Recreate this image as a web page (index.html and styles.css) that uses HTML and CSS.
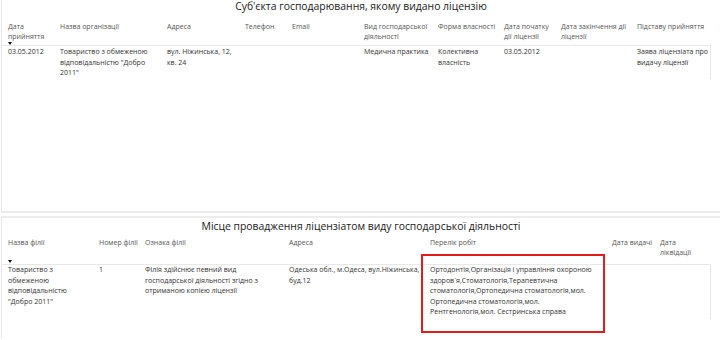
FILE: index.html
```html
<!DOCTYPE html>
<html lang="uk">
<head>
<meta charset="utf-8">
<link rel="stylesheet" href="styles.css">
</head>
<body>
<section class="panel panel-top">
  <h2 class="title">Суб'єкта господарювання, якому видано ліцензію</h2>
  <table class="grid grid-top">
    <colgroup>
      <col style="width:52px"><col style="width:107px"><col style="width:78px"><col style="width:47px"><col style="width:72px">
      <col style="width:74px"><col style="width:66px"><col style="width:57px"><col style="width:76px"><col style="width:79px">
    </colgroup>
    <thead>
      <tr>
        <th>Дата прийняття<span class="sort"></span></th>
        <th>Назва організації</th>
        <th>Адреса</th>
        <th>Телефон</th>
        <th>Email</th>
        <th>Вид господарської діяльності</th>
        <th>Форма власності</th>
        <th>Дата початку дії ліцензії</th>
        <th>Дата закінчення дії ліцензії</th>
        <th class="end">Підставу прийняття</th>
      </tr>
    </thead>
    <tbody>
      <tr>
        <td>03.05.2012</td>
        <td>Товариство з обмеженою відповідальністю "Добро 2011"</td>
        <td>вул. Ніжинська, 12, кв. 24</td>
        <td></td>
        <td></td>
        <td>Медична практика</td>
        <td>Колективна власність</td>
        <td>03.05.2012</td>
        <td></td>
        <td class="last">Заява ліцензіата про видачу ліцензії</td>
      </tr>
    </tbody>
  </table>
</section>
<section class="panel panel-bottom">
  <h2 class="title">Місце провадження ліцензіатом виду господарської діяльності</h2>
  <table class="grid grid-bottom">
    <colgroup>
      <col style="width:91px"><col style="width:46px"><col style="width:144px"><col style="width:141px">
      <col style="width:182px"><col style="width:48px"><col style="width:56px">
    </colgroup>
    <thead>
      <tr>
        <th>Назва філії<span class="sort sort-low"></span></th>
        <th class="nowrap">Номер філії</th>
        <th>Ознака філії</th>
        <th>Адреса</th>
        <th>Перелік робіт</th>
        <th class="nowrap">Дата видачі</th>
        <th class="narrow">Дата ліквідації</th>
      </tr>
    </thead>
    <tbody>
      <tr>
        <td>Товариство з обмеженою відповідальністю "Добро 2011"</td>
        <td>1</td>
        <td>Філія здійснює певний вид господарської діяльності згідно з отриманою копією ліцензії</td>
        <td>Одеська обл., м.Одеса, вул.Ніжинська, буд.12</td>
        <td class="works"><span class="highlight"></span>Ортодонтія,Організація і управління охороною здоров`я,Стоматологія,Терапевтична стоматологія,Ортопедична стоматологія,мол. Ортопедична стоматологія,мол. Рентгенологія,мол. Сестринська справа</td>
        <td></td>
        <td class="last"></td>
      </tr>
    </tbody>
  </table>
</section>
</body>
</html>
```
FILE: styles.css
```css
html, body {
  margin: 0;
  padding: 0;
  background: #fff;
}
body {
  width: 720px;
  height: 340px;
  overflow: hidden;
  font-family: "Open Sans", "DejaVu Sans", sans-serif;
  color: #333;
}
.panel {
  margin-left: 1px;
  border-left: 1px solid #e6e6e6;
  box-sizing: border-box;
}
.panel-top {
  height: 214px;
  border-bottom: 2px solid #ebebeb;
}
.panel-bottom {
  margin-top: 3px;
  border-top: 2px solid #ededed;
  height: 123px;
}
.title {
  margin: 0;
  font-family: "Open Sans", sans-serif;
  font-weight: normal;
  font-size: 10.4px;
  line-height: 15px;
  text-align: center;
  color: #1a1a1a;
}
.panel-top .title {
  margin-top: -1px;
}
.panel-bottom .title {
  margin-top: 1px;
}
.grid {
  table-layout: fixed;
  border-collapse: collapse;
  border-spacing: 0;
  font-size: 7px;
}
.grid th {
  font-weight: normal;
  color: #555;
  text-align: left;
  vertical-align: top;
  line-height: 10px;
  padding: 8px 2px 0 6px;
  height: 23px;
  border-bottom: 1px solid #e8e8e8;
  position: relative;
}
.grid th.end {
  padding-right: 0;
}
.grid th.narrow {
  padding-right: 6px;
}
.grid th.nowrap {
  white-space: nowrap;
  padding-right: 0;
}
.grid td {
  color: #333;
  vertical-align: top;
  line-height: 10.6px;
  padding: 1px 2px 0 6px;
}
.grid td.last {
  padding-right: 0;
  border-right: 1px solid #e6e6e6;
}
.grid-top tbody td {
  height: 31px;
}
.grid-bottom thead th {
  padding-top: 4px;
  height: 26px;
}
.grid-bottom tbody td {
  padding-top: 0;
  height: 54px;
}
.sort {
  display: block;
  width: 0;
  height: 0;
  margin-top: 0;
  border-left: 2.5px solid transparent;
  border-right: 2.5px solid transparent;
  border-top: 3px solid #111;
}
.sort-low {
  position: absolute;
  left: 6px;
  top: 26px;
  margin: 0;
}
.works {
  position: relative;
}
.highlight {
  position: absolute;
  left: -3px;
  top: -11px;
  width: 180px;
  height: 75px;
  border: 2px solid #e41b1b;
  pointer-events: none;
}
```
